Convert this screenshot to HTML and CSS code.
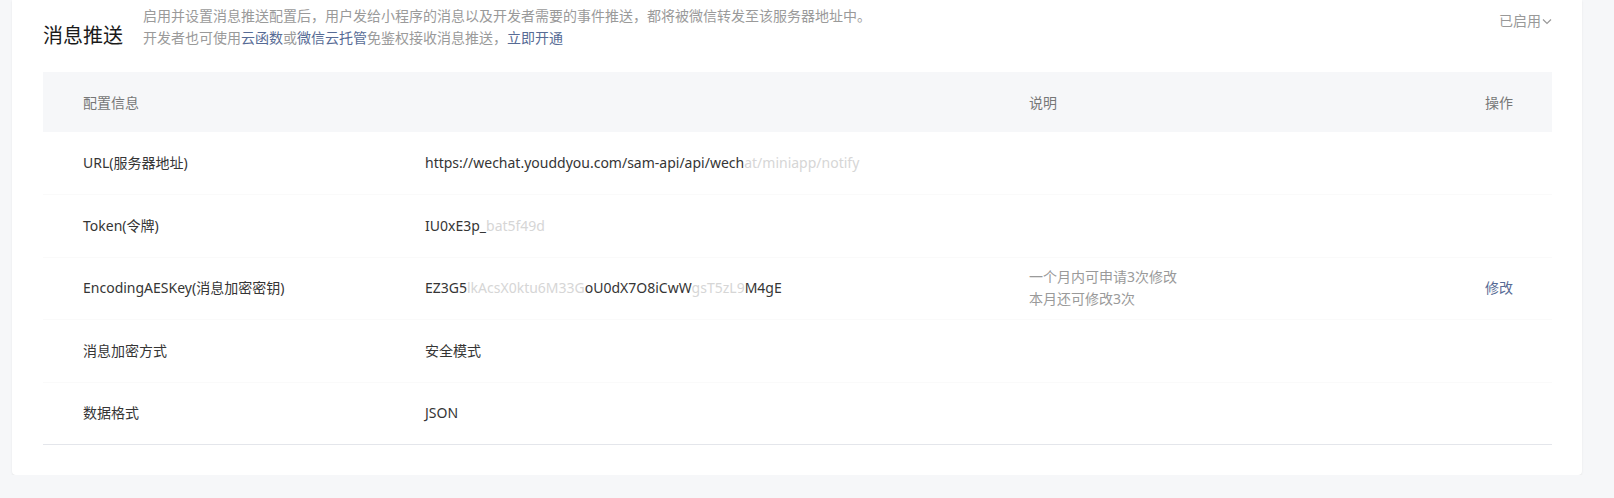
FILE: index.html
```html
<!DOCTYPE html>
<html lang="zh-CN">
<head>
  <meta charset="UTF-8">
  <meta name="viewport" content="width=device-width, initial-scale=1.0">
  <title>消息推送</title>
  <link rel="stylesheet" href="styles.css">
</head>
<body>
  <section class="card">
    <div class="card_hd">
      <h3 class="card_title">消息推送</h3>
      <div class="card_desc">
        <p>启用并设置消息推送配置后，用户发给小程序的消息以及开发者需要的事件推送，都将被微信转发至该服务器地址中。</p>
        <p>开发者也可使用<a href="#">云函数</a>或<a href="#">微信云托管</a>免鉴权接收消息推送，<a href="#">立即开通</a></p>
      </div>
      <a href="#" class="status">已启用<svg width="10" height="7" viewBox="0 0 10 7"><path d="M1 1.5l4 4 4-4" fill="none" stroke="#999" stroke-width="1.2"/></svg></a>
    </div>

    <table class="conf">
      <colgroup>
        <col class="c1"><col class="c2"><col class="c3"><col class="c4">
      </colgroup>
      <thead>
        <tr>
          <th>配置信息</th>
          <th></th>
          <th>说明</th>
          <th>操作</th>
        </tr>
      </thead>
      <tbody>
        <tr>
          <td>URL(服务器地址)</td>
          <td>https://wechat.youddyou.com/sam-api/api/wech<span class="mask">at/miniapp/notify</span></td>
          <td></td>
          <td></td>
        </tr>
        <tr>
          <td>Token(令牌)</td>
          <td>IU0xE3p_<span class="mask">bat5f49d</span></td>
          <td></td>
          <td></td>
        </tr>
        <tr>
          <td>EncodingAESKey(消息加密密钥)</td>
          <td>EZ3G5<span class="mask">lkAcsX0ktu6M33G</span>oU0dX7O8iCwW<span class="mask">gsT5zL9</span>M4gE</td>
          <td class="tips">一个月内可申请3次修改<br>本月还可修改3次</td>
          <td><a href="#">修改</a></td>
        </tr>
        <tr>
          <td>消息加密方式</td>
          <td>安全模式</td>
          <td></td>
          <td></td>
        </tr>
        <tr>
          <td>数据格式</td>
          <td>JSON</td>
          <td></td>
          <td></td>
        </tr>
      </tbody>
    </table>
  </section>
</body>
</html>
```

FILE: styles.css
```css
* {margin:0; padding:0; box-sizing: border-box;}

body{
  background: #f6f7f9;
  font-family: "Noto Sans", "Noto Sans CJK SC", sans-serif;
  font-size: 14px;
  color: #353535;
}

a{
  color: #576b95;
  text-decoration: none;
}

.card{
  margin: 0 32px 0 12px;
  padding: 5px 30px 30px 31px;
  background: #fff;
  border-radius: 0 0 4px 4px;
  box-shadow: 0 1px 2px rgba(0,0,0,0.08);
}

.card_hd{
  display: flex;
  align-items: flex-start;
  margin-bottom: 22px;
}

.card_title{
  font-size: 20px;
  font-weight: normal;
  line-height: 28px;
  margin-top: 17px;
  margin-right: 20px;
  color: #1a1a1a;
}

.card_desc{
  flex: 1;
  color: #9a9a9a;
  line-height: 22px;
}

.status{
  color: #999;
  line-height: 22px;
  margin-top: 5px;
}

.status svg{
  margin-left: 1px;
  vertical-align: 1px;
}

.conf{
  width: 100%;
  border-collapse: collapse;
  table-layout: fixed;
}

.c1{width: 382px;}
.c2{width: 604px;}
.c3{width: 456px;}

.conf th{
  height: 60px;
  background: #f6f7f9;
  font-weight: normal;
  color: #777;
  text-align: left;
}

.conf td{
  height: 62.5px;
  border-bottom: 1px solid #fafafa;
  line-height: 22px;
  white-space: nowrap;
}

.conf tr:last-child td{
  border-bottom-color: #e4e6eb;
}

.conf th:first-child,
.conf td:first-child{
  padding-left: 40px;
}

.conf .tips{
  color: #9a9a9a;
}

.mask{
  color: #d6d6d6;
}
```
